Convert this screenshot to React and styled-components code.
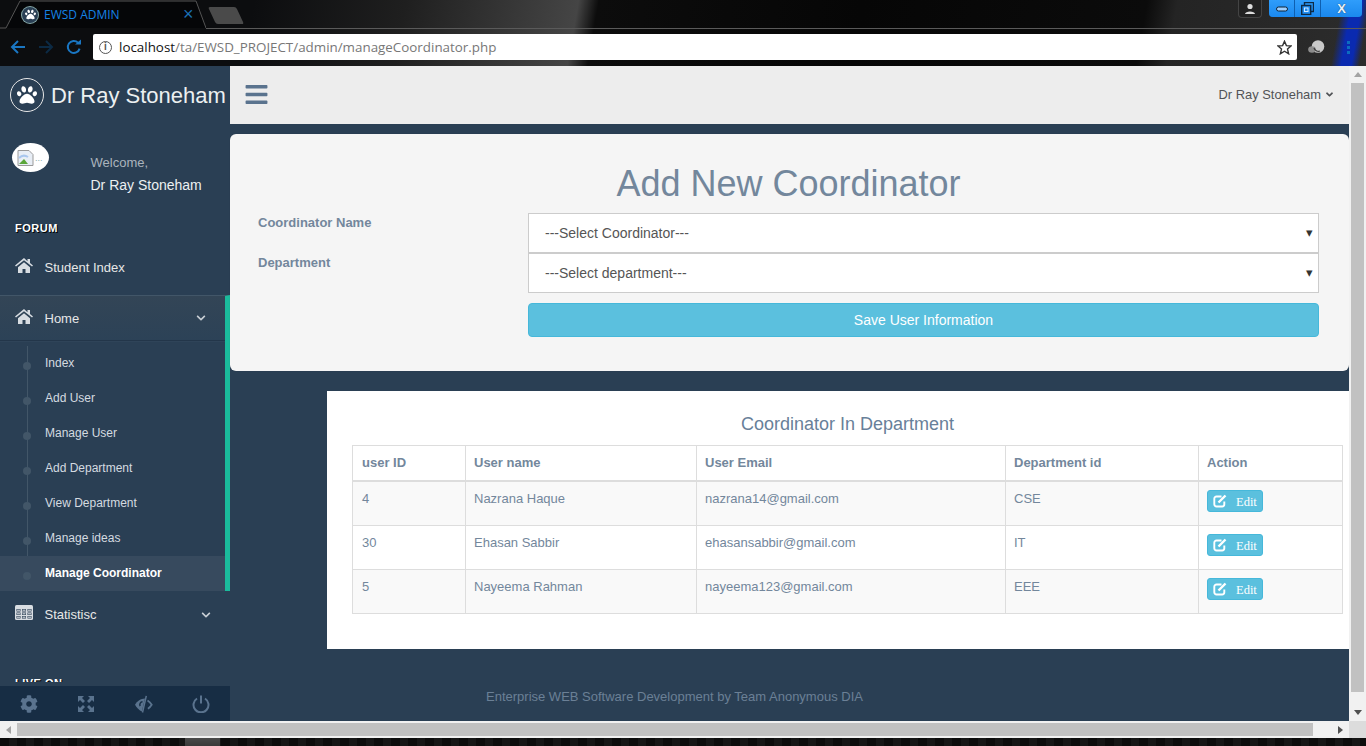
import React from "react"
import styled, { createGlobalStyle } from "styled-components"
import { FaPaw, FaBars, FaCog, FaChevronDown, FaAngleDown } from "react-icons/fa"

const GlobalStyle = createGlobalStyle`
  html, body {
    margin: 0;
    padding: 0;
    overflow: hidden;
    background: #000;
  }
  * { box-sizing: border-box; }
  body { font-family: "Liberation Sans", Arial, sans-serif; }
`

const NAV_ITEMS = ["Index", "Add User", "Manage User", "Add Department", "View Department", "Manage ideas", "Manage Coordinator"]

const ROWS = [
  { id: 4, name: "Nazrana Haque", email: "nazrana14@gmail.com", dept: "CSE" },
  { id: 30, name: "Ehasan Sabbir", email: "ehasansabbir@gmail.com", dept: "IT" },
  { id: 5, name: "Nayeema Rahman", email: "nayeema123@gmail.com", dept: "EEE" },
]

const HomeIcon = () => (
  <svg width="18" height="15" viewBox="0 0 18 15" fill="currentColor">
    <path d="M9 0 0 7.400l1 1.200L9 2.200l8 6.400 1-1.200-3-2.500V1h-2.500v2.300z" />
    <path d="M3 9.200 9 4.300l6 4.900V15h-4.500v-4h-3v4H3z" />
  </svg>
)

const TableIcon = () => (
  <svg width="18" height="15" viewBox="0 0 18 15">
    <rect x="0" y="0" width="18" height="15" rx="1.500" fill="currentColor" />
    <path d="M1.500 4h4v2.500h-4zM7 4h4v2.500H7zM12.500 4h4v2.500h-4zM1.500 7.500h4V10h-4zM7 7.500h4V10H7zM12.500 7.500h4V10h-4zM1.500 11h4v2.500h-4zM7 11h4v2.500H7zM12.500 11h4v2.500h-4z" fill="#2a3f54" />
    <path d="M2 4.500h3v1.500H2zM7.500 4.500h3v1.500h-3zM13 4.500h3v1.500h-3zM2 8h3v1.500H2zM7.500 8h3v1.500h-3zM13 8h3v1.500h-3zM2 11.500h3V13H2zM7.500 11.500h3V13h-3zM13 11.500h3V13h-3z" fill="currentColor" opacity="0.75" />
  </svg>
)

const EditIcon = () => (
  <svg width="14" height="14" viewBox="0 0 14 14" fill="none" stroke="currentColor">
    <path d="M8.500 2.500H3.500a2.200 2.200 0 0 0-2.200 2.200v5.600a2.200 2.200 0 0 0 2.200 2.200h5.600a2.200 2.200 0 0 0 2.200-2.200V7.500" strokeWidth="1.900" />
    <path d="M5.500 8.500l7-7" strokeWidth="2.400" />
  </svg>
)

const App = () => (
  <Page>
    <GlobalStyle />
    <Chrome>
      <TabStrip>
        <Tab>
          <TabShape viewBox="0 0 206 29" preserveAspectRatio="none">
            <path d="M0 28 H6 L20 1 H196 L206 28" fill="#050608" stroke="#555" strokeWidth="1" />
          </TabShape>
          <Favicon><FaPaw size={11} /></Favicon>
          <TabTitle>EWSD ADMIN</TabTitle>
          <TabClose>×</TabClose>
        </Tab>
        <NewTab />
        <WindowArea>
          <ProfileButton>
            <svg width="12" height="12" viewBox="0 0 12 12"><circle cx="6" cy="3.5" r="2.6" fill="#ddd" /><path d="M1 11 C1 7.5 11 7.5 11 11 Z" fill="#ddd" /></svg>
          </ProfileButton>
          <WindowButtons>
            <WinButton $w={25}><svg width="12" height="8" viewBox="0 0 12 8"><rect x="0.5" y="2" width="11" height="4" rx="2" fill="#9fd0ff" stroke="#123" strokeWidth="1" /></svg></WinButton>
            <WinButton $w={25}><svg width="13" height="13" viewBox="0 0 13 13"><rect x="3.5" y="0.5" width="9" height="9" fill="none" stroke="#0e2a44" strokeWidth="1.400" /><rect x="0.7" y="3.500" width="9" height="9" fill="#1f8cf0" stroke="#0e2a44" strokeWidth="1.400" /><rect x="3.500" y="6" width="3.500" height="3.500" fill="none" stroke="#cfe8ff" /></svg></WinButton>
            <WinButton $w={41}><CloseGlyph>X</CloseGlyph></WinButton>
          </WindowButtons>
        </WindowArea>
      </TabStrip>
      <Toolbar>
        <NavArrow $dim={false}>
          <svg width="16" height="16" viewBox="0 0 16 16"><path d="M15 8H2M8 2 2 8l6 6" fill="none" stroke="currentColor" strokeWidth="2" /></svg>
        </NavArrow>
        <NavArrow $dim>
          <svg width="16" height="16" viewBox="0 0 16 16"><path d="M1 8h13M8 2l6 6-6 6" fill="none" stroke="currentColor" strokeWidth="2" /></svg>
        </NavArrow>
        <NavArrow $dim={false}>
          <svg width="16" height="16" viewBox="0 0 16 16"><path d="M13.600 9.600A6 6 0 1 1 12 3.600" fill="none" stroke="currentColor" strokeWidth="2" /><path d="M9 5.500h6v-5z" fill="currentColor" /></svg>
        </NavArrow>
        <AddressBar>
          <InfoIcon>i</InfoIcon>
          <Url><b>localhost</b>/ta/EWSD_PROJECT/admin/manageCoordinator.php</Url>
          <StarOutline viewBox="0 0 16 16" width="15" height="15">
            <path d="M8 1.300 10 6l5 .4-3.800 3.300 1.200 5L8 12l-4.400 2.700 1.200-5L1 6.400 6 6z" fill="none" stroke="#333" strokeWidth="1.500" />
          </StarOutline>
        </AddressBar>
        <ExtensionIcon>
          <svg width="17" height="15" viewBox="0 0 17 15">
            <circle cx="10" cy="6.500" r="6.300" fill="#c9c9c9" />
            <ellipse cx="4" cy="9.500" rx="3.800" ry="3.200" fill="#8d8d8d" />
            <path d="M6 8c1 3 4 4 6 3" fill="none" stroke="#3a3a3a" strokeWidth="1.200" />
          </svg>
        </ExtensionIcon>
        <MenuDots><i /><i /><i /></MenuDots>
      </Toolbar>
    </Chrome>

    <Viewport>
      <Sidebar>
        <SidebarScroll>
          <Brand>
            <BrandIcon><FaPaw size={20} /></BrandIcon>
            <BrandName>Dr Ray Stoneham</BrandName>
          </Brand>
          <Profile>
            <Avatar>
              <svg width="18" height="16" viewBox="0 0 18 16"><path d="M1 .5h11l4 4v11H1z" fill="#e8eef6" stroke="#9a9a9a" /><path d="M2 14l5-5 4 5z" fill="#5aa63a" /><path d="M2 8c3-3 6-3 9-1" fill="none" stroke="#a9c7ee" strokeWidth="2" /></svg>
              <AvatarDots>...</AvatarDots>
            </Avatar>
            <ProfileInfo>
              <Welcome>Welcome,</Welcome>
              <ProfileName>Dr Ray Stoneham</ProfileName>
            </ProfileInfo>
          </Profile>
          <SectionTitle>FORUM</SectionTitle>
          <MenuItem>
            <MenuIcon><HomeIcon /></MenuIcon>
            <span>Student Index</span>
          </MenuItem>
          <ActiveGroup>
            <GroupHead>
              <MenuIcon><HomeIcon /></MenuIcon>
              <span>Home</span>
              <Chevron $right={19}><FaChevronDown size={10} /></Chevron>
            </GroupHead>
            <SubMenu>
              {NAV_ITEMS.map(item => (
                <SubItem key={item} $current={item === "Manage Coordinator"}>{item}</SubItem>
              ))}
            </SubMenu>
          </ActiveGroup>
          <MenuItem $statistic>
            <MenuIcon><TableIcon /></MenuIcon>
            <span>Statistisc</span>
            <Chevron $right={19}><FaChevronDown size={10} /></Chevron>
          </MenuItem>
          <LiveTitle>LIVE ON</LiveTitle>
        </SidebarScroll>
        <SidebarFooter>
          <FooterIcon><FaCog size={18} /></FooterIcon>
          <FooterIcon>
            <svg width="18" height="18" viewBox="0 0 18 18" fill="currentColor">
              <path d="M1 1h6L5 3l3 3-2 2-3-3-2 2zM17 1v6l-2-2-3 3-2-2 3-3-2-2zM1 17v-6l2 2 3-3 2 2-3 3 2 2zM17 17h-6l2-2-3-3 2-2 3 3 2-2z" />
            </svg>
          </FooterIcon>
          <FooterIcon>
            <svg width="19" height="18" viewBox="0 0 19 18">
              <path d="M11 3.500 7.800 16.500C4.800 15 2.500 12.400 1 9.800 3 6.300 6.800 3.500 11 3.500z" fill="currentColor" />
              <path d="M8.500 6.800A2.800 2.800 0 0 0 6.200 11" fill="none" stroke="#172D44" strokeWidth="1.500" />
              <path d="M12.300 0.800 8.500 17.500" stroke="currentColor" strokeWidth="1.500" />
              <path d="M13.500 5.500c1.800 1 3.200 2.500 4.200 4.300-1 1.600-2.200 3-3.800 4" fill="none" stroke="currentColor" strokeWidth="1.800" />
            </svg>
          </FooterIcon>
          <FooterIcon>
            <svg width="18" height="18" viewBox="0 0 18 18">
              <path d="M5 3.500a7.500 7.500 0 1 0 8 0" fill="none" stroke="currentColor" strokeWidth="2" />
              <path d="M9 0.500v8" stroke="currentColor" strokeWidth="2" />
            </svg>
          </FooterIcon>
        </SidebarFooter>
      </Sidebar>

      <Main>
        <TopNav>
          <BarsButton><FaBars size={25} /></BarsButton>
          <UserMenu>Dr Ray Stoneham <FaAngleDown size={11} /></UserMenu>
        </TopNav>
        <Content>
          <FormPanel>
            <PanelTitle>Add New Coordinator</PanelTitle>
            <FormRow>
              <FieldLabel>Coordinator Name</FieldLabel>
              <SelectBox>---Select Coordinator---<Caret>▾</Caret></SelectBox>
            </FormRow>
            <FormRow>
              <FieldLabel>Department</FieldLabel>
              <SelectBox>---Select department---<Caret>▾</Caret></SelectBox>
            </FormRow>
            <SubmitRow>
              <SaveButton>Save User Information</SaveButton>
            </SubmitRow>
          </FormPanel>

          <TableCard>
            <TableTitle>Coordinator In Department</TableTitle>
            <DataTable>
              <colgroup>
                <col width="113" />
                <col width="231" />
                <col width="309" />
                <col width="193" />
                <col width="144" />
              </colgroup>
              <thead>
                <tr>
                  <th>user ID</th>
                  <th>User name</th>
                  <th>User Email</th>
                  <th>Department id</th>
                  <th>Action</th>
                </tr>
              </thead>
              <tbody>
                {ROWS.map(row => (
                  <tr key={row.id}>
                    <td>{row.id}</td>
                    <td>{row.name}</td>
                    <td>{row.email}</td>
                    <td>{row.dept}</td>
                    <td>
                      <EditButton><EditIcon /><EditLabel>Edit</EditLabel></EditButton>
                    </td>
                  </tr>
                ))}
              </tbody>
            </DataTable>
          </TableCard>

          <PageFooter>Enterprise WEB Software Development by Team Anonymous DIA</PageFooter>
        </Content>
      </Main>

      <VScroll>
        <ScrollArrow $dir="up" />
        <VThumb />
        <ScrollArrow $dir="down" />
      </VScroll>
    </Viewport>

    <HScroll>
      <ScrollArrow $dir="left" />
      <HTrack><HThumb /></HTrack>
      <ScrollArrow $dir="right" />
      <ScrollCorner />
    </HScroll>
    <Taskbar />
  </Page>
)

const Page = styled.div`
  width: 1366px;
  height: 746px;
  display: flex;
  flex-direction: column;
  overflow: hidden;
`

const Chrome = styled.header`
  height: 66px;
  flex: none;
  background:
    linear-gradient(100deg, transparent 1322px, #0a2ab0 1332px, #0a2ab0 1342px, transparent 1350px) 0 0 / 100% 100% no-repeat,
    linear-gradient(100deg, #0c0d0f 0 250px, #1f1f1f 400px, #454545 570px, #0c0c0c 590px, #060606 850px, #0b0b0b 1130px, #242424 1160px, #2c2c2c 100%);
`

const TabStrip = styled.div`
  height: 33px;
  position: relative;
  display: flex;
  align-items: flex-start;
  &::after {
    content: "";
    position: absolute;
    left: 206px;
    right: 0;
    top: 28px;
    height: 1px;
    background: #5a5a5a;
  }
`

const Tab = styled.div`
  position: relative;
  width: 206px;
  height: 29px;
  display: flex;
  align-items: center;
  padding-left: 22px;
`

const TabShape = styled.svg`
  position: absolute;
  left: 0;
  top: 0;
  width: 100%;
  height: 100%;
`

const Favicon = styled.span`
  position: relative;
  width: 16px;
  height: 16px;
  border-radius: 50%;
  background: #2a3f54;
  color: #fff;
  display: flex;
  align-items: center;
  justify-content: center;
  box-shadow: 0 0 0 1px #8aa;
`

const TabTitle = styled.span`
  position: relative;
  margin-left: 6px;
  font-size: 12px;
  color: #1583e6;
  font-family: "Open Sans", sans-serif;
`

const TabClose = styled.span`
  position: absolute;
  left: 183px;
  top: 4px;
  color: #1a6fb5;
  font-size: 18px;
  line-height: 20px;
`

const NewTab = styled.div`
  width: 28px;
  height: 17px;
  margin: 7px 0 0 6px;
  background: #4a4a4a;
  transform: skewX(25deg);
  border-radius: 2px;
`

const WindowArea = styled.div`
  margin-left: auto;
  display: flex;
  align-items: flex-start;
  margin-right: 4px;
`

const ProfileButton = styled.div`
  width: 24px;
  height: 18px;
  border: 1px solid #444;
  border-top: 0;
  border-radius: 0 0 4px 4px;
  background: #222;
  display: flex;
  align-items: center;
  justify-content: center;
  margin-right: 7px;
`

const WindowButtons = styled.div`
  display: flex;
  height: 17px;
  border-radius: 0 0 4px 4px;
  overflow: hidden;
  background: #0e5fb0;
  gap: 1px;
`

const WinButton = styled.div`
  width: ${p => p.$w}px;
  height: 100%;
  background: linear-gradient(#2f9dfb, #1a88ee);
  display: flex;
  align-items: center;
  justify-content: center;
`

const CloseGlyph = styled.span`
  font-size: 13px;
  font-weight: bold;
  color: #e6f3ff;
  text-shadow: 0 0 1px #123;
`

const Toolbar = styled.div`
  height: 33px;
  display: flex;
  align-items: flex-start;
  padding: 1px 0 0 10px;
`

const NavArrow = styled.span`
  width: 16px;
  height: 16px;
  margin: 5px 12px 0 0;
  color: ${p => (p.$dim ? "#0c2a44" : "#1a76c2")};
  display: flex;
`

const AddressBar = styled.div`
  margin-left: -1px;
  width: 1204px;
  height: 26px;
  border-radius: 2px;
  background: #fff;
  display: flex;
  align-items: center;
  padding: 0 5px 0 6px;
`

const InfoIcon = styled.span`
  width: 13px;
  height: 13px;
  border: 1.500px solid #555;
  border-radius: 50%;
  font-size: 10px;
  font-weight: bold;
  line-height: 10px;
  text-align: center;
  color: #555;
  margin-right: 7px;
`

const Url = styled.span`
  flex: 1;
  font-family: "Open Sans", sans-serif;
  font-size: 13.380px;
  color: #777;
  b {
    font-weight: normal;
    color: #111;
  }
`

const StarOutline = styled.svg`
  flex: none;
`

const ExtensionIcon = styled.span`
  width: 17px;
  height: 15px;
  margin: 6px 0 0 11px;
  display: flex;
`

const MenuDots = styled.span`
  display: flex;
  flex-direction: column;
  gap: 2px;
  margin: 7px 0 0 22px;
  i {
    width: 3px;
    height: 3px;
    background: #0d6cc0;
  }
`

const Viewport = styled.div`
  flex: none;
  height: 655px;
  display: flex;
  background: #2a3f54;
`

const Sidebar = styled.aside`
  width: 230px;
  flex: none;
  display: flex;
  flex-direction: column;
  color: #ecf0f1;
`

const SidebarScroll = styled.div`
  flex: 1;
  min-height: 0;
  overflow: hidden;
`

const Brand = styled.div`
  height: 58px;
  display: flex;
  align-items: center;
  padding-left: 10px;
`

const BrandIcon = styled.span`
  width: 34px;
  height: 34px;
  border: 1px solid #e7e7e7;
  border-radius: 50%;
  display: flex;
  align-items: center;
  justify-content: center;
  color: #fff;
`

const BrandName = styled.span`
  margin: 2px 0 0 7px;
  font-size: 22px;
  color: #ecf0f1;
  white-space: nowrap;
`

const Profile = styled.div`
  height: 96px;
  display: flex;
  padding: 19px 0 0 12px;
`

const Avatar = styled.div`
  width: 37px;
  height: 29px;
  border-radius: 50%;
  background: #fff;
  display: flex;
  align-items: center;
  padding-left: 5px;
`

const AvatarDots = styled.span`
  font-size: 9px;
  color: #8aa;
`

const ProfileInfo = styled.div`
  margin-left: 41.500px;
  padding-top: 12px;
`

const Welcome = styled.div`
  font-size: 13px;
  line-height: 15px;
  color: #aab4bd;
`

const ProfileName = styled.div`
  margin-top: 7px;
  font-size: 14px;
  line-height: 16px;
  color: #ecf0f1;
`

const SectionTitle = styled.h3`
  margin: 0;
  padding: 0 0 0 15px;
  font-size: 11px;
  line-height: 16px;
  letter-spacing: 0.500px;
  font-weight: bold;
  color: #fff;
  text-shadow: 1px 1px #000;
`

const MenuItem = styled.div`
  position: relative;
  height: ${p => (p.$statistic ? "47px" : "43px")};
  margin-top: ${p => (p.$statistic ? "0" : "10px")};
  margin-bottom: ${p => (p.$statistic ? "0" : "6px")};
  display: flex;
  align-items: center;
  padding-left: 15px;
  font-size: 13px;
  color: #e7e7e7;
`

const MenuIcon = styled.span`
  width: 29.500px;
  flex: none;
  display: flex;
  color: #d8dde2;
  margin-top: -4px;
`

const Chevron = styled.span`
  position: absolute;
  right: ${p => p.$right}px;
  top: 50%;
  transform: translateY(-50%);
  display: flex;
  color: #c8ced4;
`

const ActiveGroup = styled.div`
  border-right: 5px solid #1abb9c;
  border-top: 1px solid #425668;
`

const GroupHead = styled.div`
  position: relative;
  height: 45px;
  display: flex;
  align-items: center;
  padding-left: 15px;
  font-size: 13px;
  color: #e7e7e7;
  background: linear-gradient(#334556, #2c4257);
  border-bottom: 1px solid #23364a;
  box-shadow: 0 1px 0 #2f4459;
`

const SubMenu = styled.ul`
  list-style: none;
  margin: 0;
  padding: 5px 0 0;
  position: relative;
  &::before {
    content: "";
    position: absolute;
    left: 27px;
    top: 5px;
    bottom: 0;
    width: 1px;
    background: #425668;
  }
`

const SubItem = styled.li`
  position: relative;
  height: 35px;
  padding-left: 45px;
  font-size: 12px;
  line-height: 35px;
  font-weight: ${p => (p.$current ? "bold" : "normal")};
  color: ${p => (p.$current ? "#fff" : "#d5dbe0")};
  background: ${p => (p.$current ? "#374a5e" : "transparent")};
  &::before {
    content: "";
    position: absolute;
    left: 23px;
    top: 16px;
    width: 8px;
    height: 8px;
    border-radius: 50%;
    background: #425668;
  }
`

const LiveTitle = styled(SectionTitle)`
  margin-top: 37px;
  height: 7px;
  overflow: hidden;
`

const SidebarFooter = styled.div`
  height: 35px;
  flex: none;
  background: #172d44;
  display: flex;
  color: #5a738e;
`

const FooterIcon = styled.span`
  width: 25%;
  display: flex;
  align-items: center;
  justify-content: center;
`

const Main = styled.main`
  flex: 1;
  min-width: 0;
  display: flex;
  flex-direction: column;
`

const TopNav = styled.nav`
  height: 58px;
  flex: none;
  background: #ededed;
  display: flex;
  align-items: center;
  justify-content: space-between;
  padding: 0 14px 2px;
`

const BarsButton = styled.span`
  display: flex;
  color: #5a738e;
`

const UserMenu = styled.span`
  font-size: 12.900px;
  color: #515356;
  display: flex;
  align-items: center;
  gap: 3px;
`

const Content = styled.div`
  flex: 1;
  min-height: 0;
  padding-top: 10px;
`

const FormPanel = styled.section`
  height: 237px;
  background: #f5f5f5;
  border-radius: 6px;
  box-shadow: 0 0 1px rgba(0, 0, 0, 0.2);
  padding: 29px 30px 0 28px;
`

const PanelTitle = styled.h1`
  margin: 0;
  text-align: center;
  font-size: 36px;
  font-weight: normal;
  line-height: 42px;
  color: #73879c;
`

const FormRow = styled.div`
  display: grid;
  grid-template-columns: 270px 1fr;
  height: 40px;
  &:first-of-type {
    margin-top: 8px;
  }
`

const FieldLabel = styled.label`
  font-size: 13px;
  line-height: 20px;
  font-weight: bold;
  color: #73879c;
`

const SelectBox = styled.div`
  position: relative;
  height: 40px;
  background: #fff;
  border: 1px solid #ccc;
  padding-left: 16px;
  font-size: 14px;
  line-height: 38px;
  color: #555;
`

const Caret = styled.span`
  position: absolute;
  right: 5px;
  top: 0;
  font-size: 13px;
  color: #333;
`

const SubmitRow = styled.div`
  margin: 10px 0 0 270px;
`

const SaveButton = styled.button`
  display: block;
  width: 100%;
  height: 34px;
  border: 1px solid #46b8da;
  border-radius: 4px;
  background: #5bc0de;
  font-family: inherit;
  font-size: 14px;
  color: #fff;
`

const TableCard = styled.section`
  height: 258px;
  margin: 20px 0 0 97px;
  background: #fff;
  padding: 21px 6px 0 25px;
`

const TableTitle = styled.h3`
  margin: 0 0 9px;
  text-align: center;
  font-size: 18px;
  font-weight: normal;
  line-height: 24px;
  color: #688099;
`

const DataTable = styled.table`
  width: 990px;
  table-layout: fixed;
  border-collapse: collapse;
  font-size: 13px;
  color: #73879c;
  th, td {
    border: 1px solid #ddd;
    padding: 8px 8px;
    text-align: left;
    vertical-align: top;
  }
  th:first-child, td:first-child {
    padding-left: 9px;
  }
  th {
    height: 35px;
    font-size: 13px;
    line-height: 18px;
    border-bottom-width: 2px;
  }
  td {
    height: 44px;
    line-height: 18px;
  }
  tbody tr:nth-child(odd) {
    background: #f9f9f9;
  }
`

const EditButton = styled.span`
  display: inline-flex;
  align-items: center;
  width: 56px;
  height: 22px;
  padding-left: 5px;
  border: 1px solid #46b8da;
  border-radius: 3px;
  background: #5bc0de;
  color: #fff;
`

const EditLabel = styled.span`
  margin-left: 9px;
  margin-top: 2px;
  font-family: "Liberation Serif", serif;
  font-size: 12.500px;
`

const PageFooter = styled.footer`
  margin-top: 40px;
  padding-left: 256px;
  font-size: 13px;
  line-height: 16px;
  color: #6b8096;
`

const VScroll = styled.div`
  width: 17px;
  flex: none;
  background: #f1f1f1;
  display: flex;
  flex-direction: column;
`

const VThumb = styled.div`
  flex: 1;
  margin: 0 2px 12px;
  background: #c1c1c1;
`

const ARROWS = {
  up: "border-width: 0 4px 5px; border-color: transparent transparent #a3a3a3;",
  down: "border-width: 5px 4px 0; border-color: #505050 transparent transparent;",
  left: "border-width: 4px 5px 4px 0; border-color: transparent #a3a3a3 transparent transparent;",
  right: "border-width: 4px 0 4px 5px; border-color: transparent transparent transparent #505050;",
}

const ScrollArrow = styled.span`
  width: 17px;
  height: 17px;
  flex: none;
  display: flex;
  align-items: center;
  justify-content: center;
  &::before {
    content: "";
    border-style: solid;
    ${p => ARROWS[p.$dir]}
  }
`

const HScroll = styled.div`
  height: 17px;
  flex: none;
  display: flex;
  background: #f1f1f1;
`

const HTrack = styled.div`
  flex: 1;
  padding: 2px 0;
`

const HThumb = styled.div`
  width: 1296px;
  height: 13px;
  background: #c1c1c1;
`

const ScrollCorner = styled.span`
  width: 17px;
  background: #dcdcdc;
`

const Taskbar = styled.div`
  height: 8px;
  flex: none;
  background:
    linear-gradient(#4a4a4a, #3a3a3a) 185px 0 / 35px 100% no-repeat,
    repeating-linear-gradient(90deg, #0c0c0c 0 9px, #161616 9px 17px);
`

export default App
